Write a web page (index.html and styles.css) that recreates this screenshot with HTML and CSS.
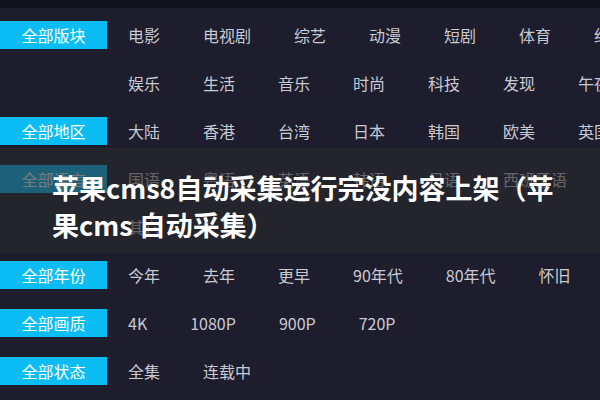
FILE: index.html
```html
<!DOCTYPE html>
<html lang="zh-CN">
<head>
<meta charset="utf-8">
<title>苹果cms8自动采集</title>
<link rel="stylesheet" href="styles.css">
</head>
<body>
<div class="topbar"></div>
<div class="filters">
  <div class="line"><span class="label">全部版块</span>
    <ul class="items"><li>电影</li><li>电视剧</li><li>综艺</li><li>动漫</li><li>短剧</li><li>体育</li><li>纪录片</li></ul></div>
  <div class="line"><span class="label blank"></span>
    <ul class="items"><li>娱乐</li><li>生活</li><li>音乐</li><li>时尚</li><li>科技</li><li>发现</li><li>午夜</li></ul></div>
  <div class="line"><span class="label">全部地区</span>
    <ul class="items"><li>大陆</li><li>香港</li><li>台湾</li><li>日本</li><li>韩国</li><li>欧美</li><li>英国</li></ul></div>
  <div class="line"><span class="label">全部语言</span>
    <ul class="items"><li>国语</li><li>粤语</li><li>英语</li><li>韩语</li><li>日语</li><li>西班牙语</li></ul></div>
  <div class="line"><span class="label blank"></span>
    <ul class="items"><li>其它</li></ul></div>
  <div class="line"><span class="label">全部年份</span>
    <ul class="items"><li>今年</li><li>去年</li><li>更早</li><li>90年代</li><li>80年代</li><li>怀旧</li></ul></div>
  <div class="line"><span class="label">全部画质</span>
    <ul class="items"><li>4K</li><li>1080P</li><li>900P</li><li>720P</li></ul></div>
  <div class="line"><span class="label">全部状态</span>
    <ul class="items"><li>全集</li><li>连载中</li></ul></div>
</div>
<div class="overlay">
  <h1 class="title">苹果cms8自动采集运行完没内容上架（苹果cms 自动采集）</h1>
</div>
</body>
</html>
```
FILE: styles.css
```css
html, body {
  margin: 0;
  padding: 0;
}
body {
  width: 600px;
  height: 400px;
  overflow: hidden;
  position: relative;
  background: #1d1d2d;
  font-family: "Noto Sans CJK SC", "Noto Sans", sans-serif;
  font-size: 16px;
  color: #c9c9d3;
}
.topbar {
  height: 8px;
  background: #12121d;
}
.filters {
  padding-top: 13px;
}
.line {
  display: flex;
  align-items: center;
  height: 28px;
  margin-bottom: 20px;
  white-space: nowrap;
}
.label {
  flex: 0 0 107px;
  height: 28px;
  line-height: 28px;
  text-align: center;
  background: #0bbdf3;
  color: #ffffff;
}
.label.blank {
  background: transparent;
}
.items {
  display: flex;
  gap: 43px;
  margin: 0 0 0 21px;
  padding: 0;
  list-style: none;
}
.items li {
  line-height: 28px;
}
.overlay {
  position: absolute;
  left: 0;
  right: 0;
  top: 148px;
  height: 105px;
  background: rgba(40, 40, 44, 0.62);
}
.title {
  margin: 0;
  padding: 21px 0 0 52px;
  width: 512px;
  font-size: 27px;
  line-height: 37px;
  font-weight: 700;
  color: #ffffff;
}
```
